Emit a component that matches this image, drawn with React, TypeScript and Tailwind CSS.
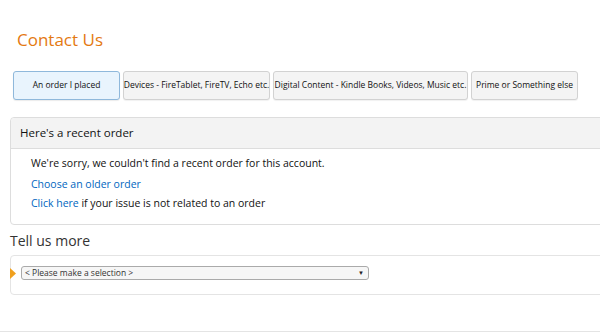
export default function App() {
  const btn =
    "h-[29px] px-[2px] flex items-center justify-center rounded-[3px] border text-[8.5px] text-[#111] whitespace-nowrap";
  return (
    <div className="w-[600px] h-[335px] bg-white overflow-hidden font-['Open_Sans',sans-serif] text-[#111]">
      <div className="pt-[29px] pl-[17px] text-[17px] leading-[22px] text-[#e47911]">Contact Us</div>
      <div className="mt-[20px] pl-[13px] flex gap-[3px]">
        <div className={`${btn} w-[107px] bg-[#e9f4fd] border-[#8fb8db] shadow-[0_1px_1px_rgba(0,0,0,0.08)]`}>An order I placed</div>
        <div className={`${btn} w-[147px] bg-[#f4f4f4] border-[#d2d2d2] shadow-[0_1px_1px_rgba(0,0,0,0.06)]`}>Devices - FireTablet, FireTV, Echo etc.</div>
        <div className={`${btn} w-[195px] bg-[#f4f4f4] border-[#d2d2d2] shadow-[0_1px_1px_rgba(0,0,0,0.06)]`}>Digital Content - Kindle Books, Videos, Music etc.</div>
        <div className={`${btn} w-[107px] bg-[#f4f4f4] border-[#d2d2d2] shadow-[0_1px_1px_rgba(0,0,0,0.06)]`}>Prime or Something else</div>
      </div>
      <div className="mt-[17px] ml-[10px] w-[600px] border border-[#dddddd] rounded-[4px]">
        <div className="h-[31px] bg-[#f3f3f3] border-b border-[#dddddd] pl-[9px] flex items-center text-[11.5px] text-[#111] rounded-t-[4px]">Here's a recent order</div>
        <div className="pl-[20px] pt-[4px] pb-[11px] text-[10.5px] leading-[20px]">
          <div>We're sorry, we couldn't find a recent order for this account.</div>
          <div className="text-[#0066c0] mt-[1px]">Choose an older order</div>
          <div className="-mt-[1px]">
            <span className="text-[#0066c0]">Click here</span> if your issue is not related to an order
          </div>
        </div>
      </div>
      <div className="mt-[6px] pl-[10px] text-[14px] leading-[20px] text-[#333]">Tell us more</div>
      <div className="mt-[4px] ml-[10px] w-[600px] h-[40px] border border-[#e4e4e4] rounded-[4px] relative">
        <svg className="absolute left-[-1px] top-[12px]" width="6" height="11" viewBox="0 0 6 11">
          <path d="M0 0 L6 5.5 L0 11 Z" fill="#f0a01e" />
        </svg>
        <div className="absolute left-[10px] top-[10px] w-[348px] h-[14px] rounded-[3px] border border-[#aaaaaa] bg-[#f6f6f6] flex items-center pl-[3px] text-[8.5px] text-[#333]">
          <span>&lt; Please make a selection &gt;</span>
          <span className="ml-auto mr-[4px] text-[6px] text-[#222]">▼</span>
        </div>
      </div>
      <div className="mt-[36px] border-t border-[#e4e4e4]" />
    </div>
  );
}
